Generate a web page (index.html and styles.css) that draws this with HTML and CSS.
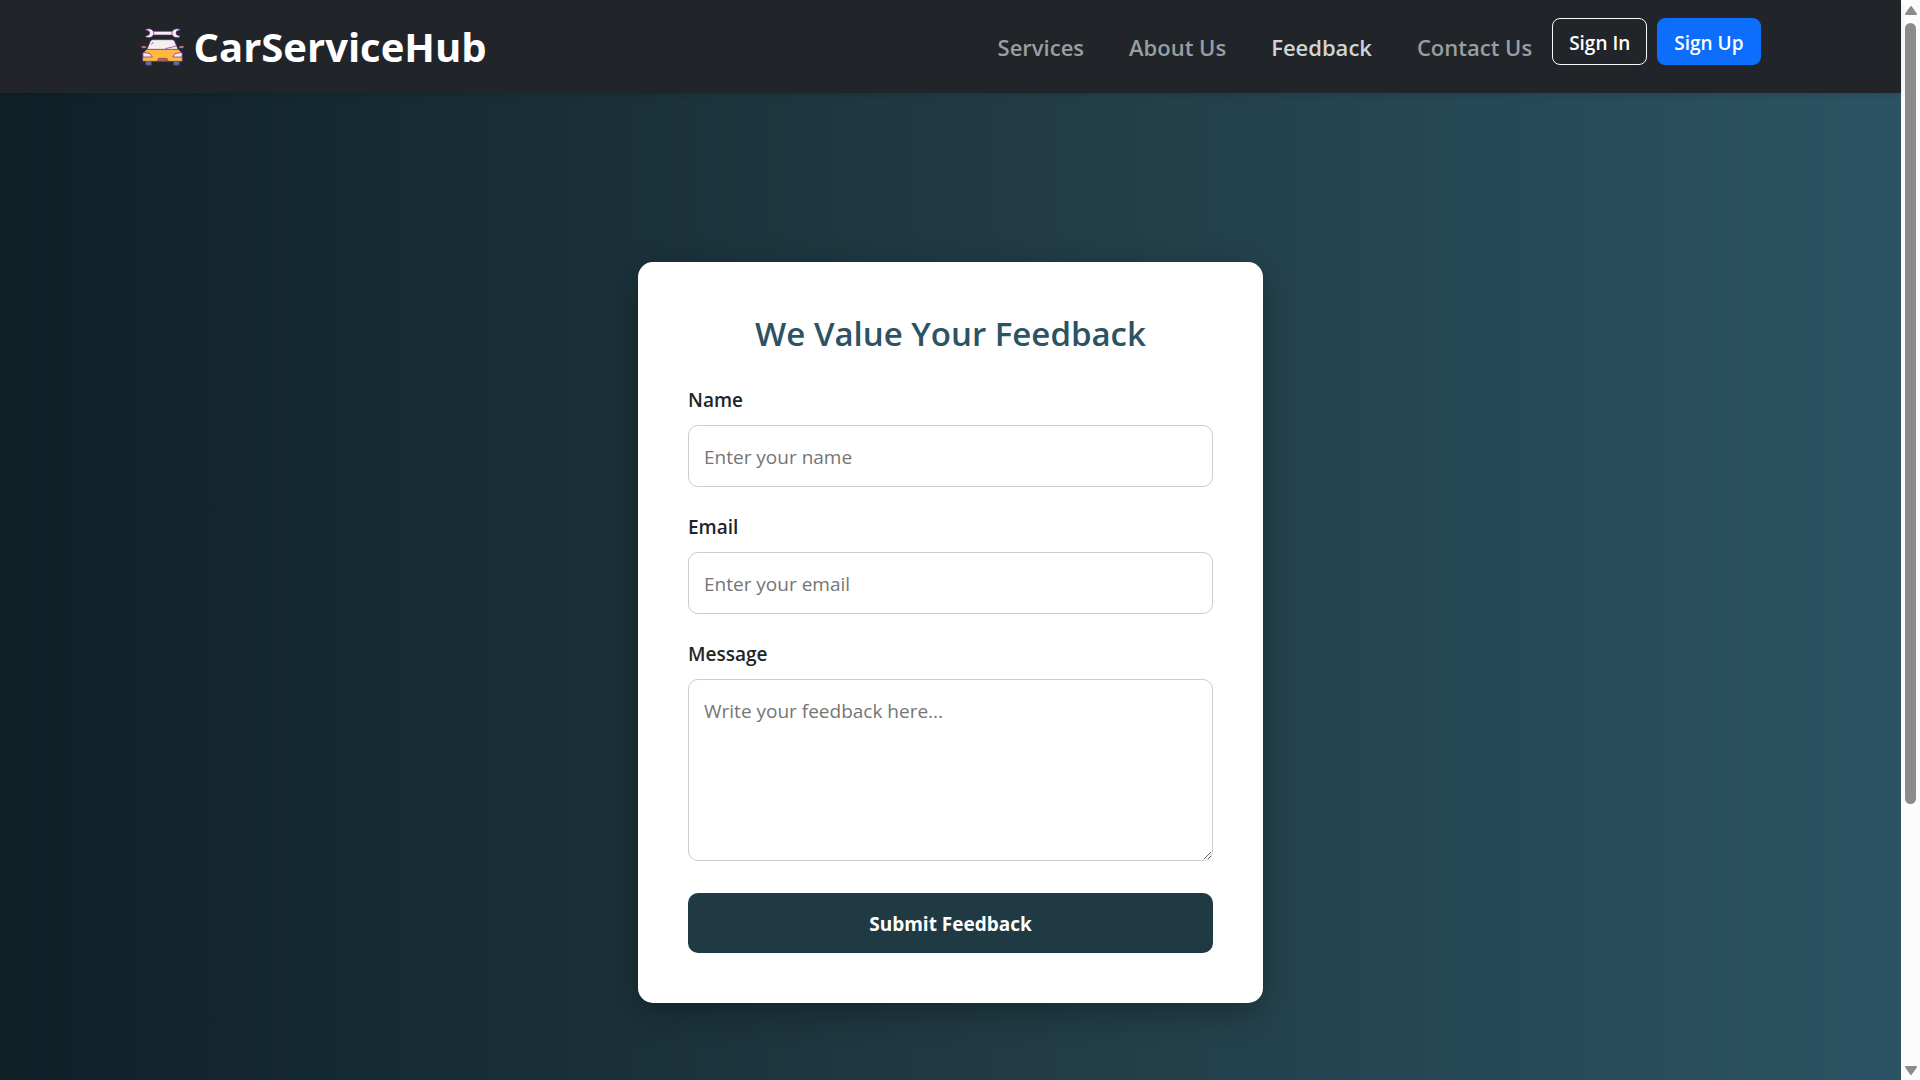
FILE: index.html
```html
<!DOCTYPE html>
<html lang="en">
<head>
<meta charset="utf-8">
<meta name="viewport" content="width=device-width, initial-scale=1">
<title>CarServiceHub - Feedback</title>
<link rel="stylesheet" href="styles.css">
</head>
<body>
<div class="page">
  <header class="navbar">
    <div class="container">
      <a class="brand" href="#">
        <svg class="brand-icon" viewBox="9 15 129 114" aria-hidden="true">
          <g stroke="#6a2290" stroke-width="2" stroke-linejoin="round">
            <path fill="#f4eff4" d="M23 19Q41 14 46 25H103Q108 14 126 19L125 22Q114 22 114 30T125 38L126 42Q108 47 103 36H46Q41 47 23 42L24 38Q35 38 35 30T24 22Z"/>
            <path fill="none" d="M47 25v11M102 25v11"/>
            <path fill="#566fae" d="M23 112h17v15H25l-2-3zM107 112h17v12l-2 3h-15z"/>
            <path fill="#fb9a3c" d="M11 69h11l4 6H11zM137 69h-11l-4 6h15z"/>
            <path fill="#ffb93c" d="M27 78h93l13 13v24H14V91z"/>
            <path fill="#f4eff0" d="M27 79l10-24q2-5 7-5h59q5 0 7 5l10 24z"/>
            <path fill="none" d="M40 65l6-8M82 77l33-8"/>
            <path fill="#f5e8ef" d="M15 88l21 4 7 10H15zM132 88l-21 4-7 10h28z"/>
            <path fill="#ad6750" stroke="#8a4a60" d="M61 106h26l3 8H58z"/>
          </g>
        </svg>
        <span>CarServiceHub</span>
      </a>
      <nav class="nav" aria-label="Main">
        <ul class="nav-links">
          <li><a href="#">Services</a></li>
          <li><a href="#">About Us</a></li>
          <li><a class="active" href="#" aria-current="page">Feedback</a></li>
          <li><a href="#">Contact Us</a></li>
        </ul>
        <div class="nav-actions">
          <button class="btn btn-outline" type="button">Sign In</button>
          <button class="btn btn-primary" type="button">Sign Up</button>
        </div>
      </nav>
    </div>
  </header>
  <main class="feedback">
    <form class="card">
      <h1 class="card-title">We Value Your Feedback</h1>
      <div class="field">
        <label for="name">Name</label>
        <input id="name" type="text" placeholder="Enter your name">
      </div>
      <div class="field">
        <label for="email">Email</label>
        <input id="email" type="email" placeholder="Enter your email">
      </div>
      <div class="field">
        <label for="message">Message</label>
        <textarea id="message" rows="5" placeholder="Write your feedback here..."></textarea>
      </div>
      <button class="submit" type="submit">Submit Feedback</button>
    </form>
  </main>
</div>
<div class="scrollbar" aria-hidden="true">
  <svg class="arrow" viewBox="0 0 14 10"><path d="M7 1L12 8H2Z"/></svg>
  <div class="track"><div class="thumb"></div></div>
  <svg class="arrow" viewBox="0 0 14 10"><path d="M7 9L2 2H12Z"/></svg>
</div>
</body>
</html>
```
FILE: styles.css
```css
* {
  box-sizing: border-box;
}

body {
  margin: 0;
  min-height: 100vh;
  display: grid;
  grid-template-columns: minmax(0, 1fr) 19px;
  font-family: "Segoe UI", "Open Sans", "Noto Sans", sans-serif;
  font-size: 19px;
  color: #212529;
}

.page {
  display: flex;
  flex-direction: column;
}

/* Navigation */
.navbar {
  position: relative;
  padding: 18px 0;
  background: #212529;
  box-shadow: 0 2px 5px rgba(0, 0, 0, 0.1);
}

.container {
  width: 100%;
  max-width: 1650px;
  margin: 0 auto;
  padding: 0 15px;
  display: flex;
  align-items: center;
  justify-content: space-between;
}

.brand {
  display: flex;
  align-items: center;
  gap: 10px;
  color: #fff;
  font-size: 40px;
  font-weight: 700;
  line-height: 57px;
  text-decoration: none;
}

.brand-icon {
  width: 43px;
  height: 38px;
}

.nav {
  display: flex;
  align-items: flex-start;
  gap: 10px;
}

.nav-links {
  display: flex;
  gap: 25px;
  margin: 0;
  padding: 0;
  list-style: none;
}

.nav-links a {
  display: block;
  padding: 10px 10px 8px;
  color: #9b9d9f;
  font-size: 22px;
  font-weight: 600;
  line-height: 39px;
  text-decoration: none;
}

.nav-links .active {
  color: #d3d3d4;
}

.nav-actions {
  display: flex;
  gap: 10px;
}

.btn {
  height: 47px;
  padding: 2px 16px 0;
  border: 1px solid;
  border-radius: 8px;
  color: #fff;
  font-family: inherit;
  font-size: 19px;
  font-weight: 600;
  line-height: 30px;
}

.btn-outline {
  border-color: #f8f9fa;
  background: transparent;
}

.btn-primary {
  border-color: #0d6efd;
  background: #0d6efd;
}

/* Feedback form */
.feedback {
  flex: 1;
  display: flex;
  justify-content: center;
  align-items: flex-start;
  padding: 169px 20px 77px;
  background: linear-gradient(to right, #0f2027, #203a43, #2c5364);
}

.card {
  width: 100%;
  max-width: 625px;
  padding: 50px;
  border-radius: 15px;
  background: #fff;
  box-shadow: 0 10px 32px rgba(0, 0, 0, 0.3);
}

.card-title {
  margin: 0 0 28px;
  color: #2c5364;
  font-size: 33px;
  font-weight: 600;
  line-height: 44px;
  text-align: center;
}

.field {
  display: flex;
  flex-direction: column;
  gap: 8px;
  margin-bottom: 24px;
}

.field label {
  font-weight: 600;
  line-height: 33px;
}

.field input,
.field textarea {
  width: 100%;
  padding: 16px 15px 14px;
  border: 1px solid #ccc;
  border-radius: 10px;
  background: #fff;
  color: inherit;
  font-family: inherit;
  font-size: 19px;
  line-height: 30px;
}

.field input {
  height: 62px;
}

.field textarea {
  height: 182px;
  resize: vertical;
}

.field ::placeholder {
  color: #757575;
}

.submit {
  width: 100%;
  height: 60px;
  margin-top: 8px;
  padding: 2px 16px 0;
  border: 0;
  border-radius: 10px;
  background: #203a43;
  color: #fff;
  font-family: inherit;
  font-size: 19px;
  font-weight: 700;
}

/* Page scrollbar */
.scrollbar {
  display: flex;
  flex-direction: column;
  align-items: center;
  gap: 7px;
  padding: 6px 0 5px;
  background: #fcfcfc;
}

.arrow {
  width: 14px;
  height: 10px;
  fill: #8b8b8b;
  stroke: #8b8b8b;
  stroke-width: 2;
  stroke-linejoin: round;
}

.track {
  flex: 1;
  width: 11px;
}

.thumb {
  height: 75.5%;
  border-radius: 6px;
  background: #8b8b8b;
}
```
